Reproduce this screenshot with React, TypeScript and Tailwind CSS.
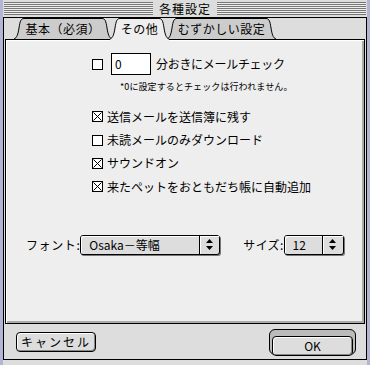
import React from 'react'

const font = "font-['Noto_Sans_CJK_JP',sans-serif]"

// Checkbox, drawn as in the System 7 look
function Check({ on }: { on?: boolean }) {
  return (
    <svg width="11" height="11" viewBox="0 0 11 11" className="shrink-0">
      <rect x="0.5" y="0.5" width="10" height="10" fill="#ffffff" stroke="#000" />
      {on && <path d="M1.5 1.5 L9.5 9.5 M9.5 1.5 L1.5 9.5" stroke="#000" strokeWidth="1" />}
    </svg>
  )
}

function Tab({ label, width, active }: { label: string; width: number; active?: boolean }) {
  const w = width
  const d = `M0 21 C3 20 4 16 5 10 C6 3 7 0.5 10 0.5 L${w - 10} 0.5 C${w - 7} 0.5 ${w - 6} 3 ${w - 5} 10 C${w - 4} 16 ${w - 3} 20 ${w} 21`
  return (
    <div
      className={`relative h-[22px] flex items-start justify-center pt-[2px] ${active ? 'z-10' : 'z-0'} -mr-[2px]`}
      style={{ width: w }}
    >
      <svg width={w} height="23" className="absolute left-0 top-0" viewBox={`0 0 ${w} 23`}>
        <path d={d + ' Z'} fill={active ? '#eeeeee' : '#cccccc'} stroke="none" />
        {active && <rect x="0" y="20" width={w} height="3" fill="#eeeeee" />}
        <path d={d} fill="none" stroke="#000" strokeWidth="1" />
      </svg>
      <span className="relative text-[12px] leading-[18px] tracking-[0.5px]">{label}</span>
    </div>
  )
}

function Arrows() {
  return (
    <svg width="9" height="12" viewBox="0 0 9 12">
      <path d="M4.5 0 L8 4 L1 4 Z" fill="#000" />
      <path d="M1 7 L8 7 L4.5 11 Z" fill="#000" />
    </svg>
  )
}

function Popup({ value, width, arrowW }: { value: string; width: number; arrowW: number }) {
  return (
    <div
      className="h-[20px] flex items-stretch border border-black rounded-[3px] bg-[#dddddd] shadow-[1px_1px_0_#777777]"
      style={{ width }}
    >
      <div className="flex-1 flex items-center pl-[8px] text-[12px] shadow-[inset_1px_1px_0_#ffffff] rounded-l-[2px]">
        {value}
      </div>
      <div
        className="flex items-center justify-center border-l border-black shadow-[inset_1px_1px_0_#ffffff]"
        style={{ width: arrowW }}
      >
        <Arrows />
      </div>
    </div>
  )
}

function Option({ label, on }: { label: string; on?: boolean }) {
  return (
    <div className="h-[23.4px] flex items-center gap-[4px]">
      <Check on={on} />
      <span className="text-[12px] leading-none">{label}</span>
    </div>
  )
}

export default function App() {
  return (
    <div className={`w-[370px] h-[365px] bg-[#dddddd] flex flex-col text-black ${font} border-l-[3px] border-r-[3px] border-[#b4b4d4]`}>
      {/* Title bar */}
      <div className="h-[18px] shrink-0 flex items-center border-b border-black bg-[#dddddd] px-[1px]">
        <div className="flex-1 h-[13px] bg-[repeating-linear-gradient(to_bottom,#777777_0px,#777777_1px,#eeeeee_1px,#eeeeee_2px)]" />
        <span className="px-[6px] text-[12px] leading-none tracking-[1px]">各種設定</span>
        <div className="flex-1 h-[13px] bg-[repeating-linear-gradient(to_bottom,#777777_0px,#777777_1px,#eeeeee_1px,#eeeeee_2px)]" />
      </div>

      <div className="flex-1 flex flex-col border-x border-b border-black mb-[5px] pl-[1px] pr-[1px]">
        {/* Tabs */}
        <div className="h-[22px] flex items-end pl-[9px] pt-[1px] -mb-[1px]">
          <Tab label="基本（必須）" width={98} />
          <Tab label="その他" width={59} active />
          <Tab label="むずかしい設定" width={109} />
        </div>

        {/* Panel */}
        <div className="h-[285px] border border-black bg-[#eeeeee] shadow-[inset_1px_1px_0_#ffffff,inset_-2px_-2px_0_#aaaaaa] flex flex-col">
          <div className="pl-[86px] pt-[13px] flex flex-col">
            <div className="h-[22px] flex items-center">
              <Check />
              <div className="ml-[8px] w-[40px] h-[22px] border border-black bg-white flex items-center pl-[3px] text-[12px]">
                0
              </div>
              <span className="ml-[5px] text-[12px] tracking-[-0.3px]">分おきにメールチェック</span>
            </div>
            <div className="pl-[28px] mt-[6px] text-[9px] leading-[12px] tracking-[0.1px]">
              *0に設定するとチェックは行われません。
            </div>
            <div className="mt-[12px] flex flex-col">
              <Option label="送信メールを送信簿に残す" on />
              <Option label="未読メールのみダウンロード" />
              <Option label="サウンドオン" on />
              <Option label="来たペットをおともだち帳に自動追加" on />
            </div>
          </div>

          <div className="mt-[36px] pl-[20px] flex items-center">
            <span className="text-[12px] tracking-[0.6px]">フォント:</span>
            <div className="ml-[0px]">
              <Popup value="Osaka－等幅" width={140} arrowW={20} />
            </div>
            <span className="ml-[23px] text-[12px] tracking-[0.3px]">サイズ:</span>
            <div className="ml-[0px]">
              <Popup value="12" width={60} arrowW={21} />
            </div>
          </div>
        </div>

        {/* Buttons */}
        <div className="flex-1 flex items-center justify-between pl-[11px] pr-[9px] pt-[1px]">
          <button className="w-[80px] h-[20px] rounded-[4px] border border-black bg-[#dddddd] shadow-[inset_1px_1px_0_#ffffff,inset_-1px_-1px_0_#888888] text-[12px] leading-none tracking-[2px]">
            キャンセル
          </button>
          <div className="w-[87px] h-[26px] rounded-[6px] border border-black bg-[#bbbbbb] p-[2px]">
            <button className="w-full h-full rounded-[4px] border border-black bg-[#dddddd] shadow-[inset_1px_1px_0_#ffffff,inset_-1px_-1px_0_#888888] text-[12px] leading-none">
              OK
            </button>
          </div>
        </div>
      </div>
    </div>
  )
}
